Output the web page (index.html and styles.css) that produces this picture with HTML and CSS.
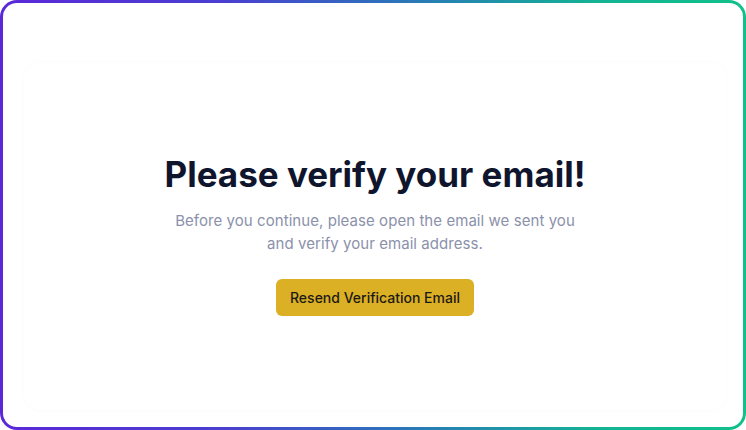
FILE: index.html
```html
<!DOCTYPE html>
<html lang="en">
<head>
  <meta charset="UTF-8">
  <title>Verify your email</title>
  <link rel="stylesheet" href="styles.css">
</head>
<body>
  <div class="frame">
    <div class="inner">
      <div class="card">
        <h1>Please verify your email!</h1>
        <p>Before you continue, please open the email we sent you and verify your email address.</p>
        <button class="resend">Resend Verification Email</button>
      </div>
    </div>
  </div>
</body>
</html>
```

FILE: styles.css
```css
html, body {
  margin: 0;
  padding: 0;
}
body {
  font-family: Inter, "Noto Sans", sans-serif;
  background: #fff;
  width: 746px;
  height: 430px;
}
.frame {
  box-sizing: border-box;
  width: 746px;
  height: 430px;
  padding: 3px;
  border-radius: 17px;
  background: linear-gradient(90deg, #5b28d8 0%, #4a3fd0 30%, #2a78b8 55%, #13b394 80%, #10c08a 100%);
}
.inner {
  box-sizing: border-box;
  height: 100%;
  background: #fff;
  border-radius: 14px;
  padding: 60px 17px 17px 21px;
}
.card {
  box-sizing: border-box;
  height: 100%;
  border-radius: 16px;
  background: #fff;
  box-shadow: 0 0 5px 2px rgba(0, 0, 0, 0.012);
  display: flex;
  flex-direction: column;
  align-items: center;
  justify-content: center;
  text-align: center;
  padding-top: 4px;
  padding-bottom: 8px;
}
h1 {
  margin: 0;
  font-size: 35px;
  font-weight: 700;
  color: #10152e;
}
p {
  margin: 14px 0 0;
  width: 410px;
  font-size: 15px;
  line-height: 23px;
  letter-spacing: 0.06px;
  color: #8b91aa;
}
.resend {
  margin-top: 24px;
  width: 198px;
  height: 37px;
  border: none;
  border-radius: 6px;
  background: #dcb025;
  color: #1b1a16;
  font-family: Inter, sans-serif;
  font-size: 14px;
  font-weight: 500;
  cursor: pointer;
}
```
